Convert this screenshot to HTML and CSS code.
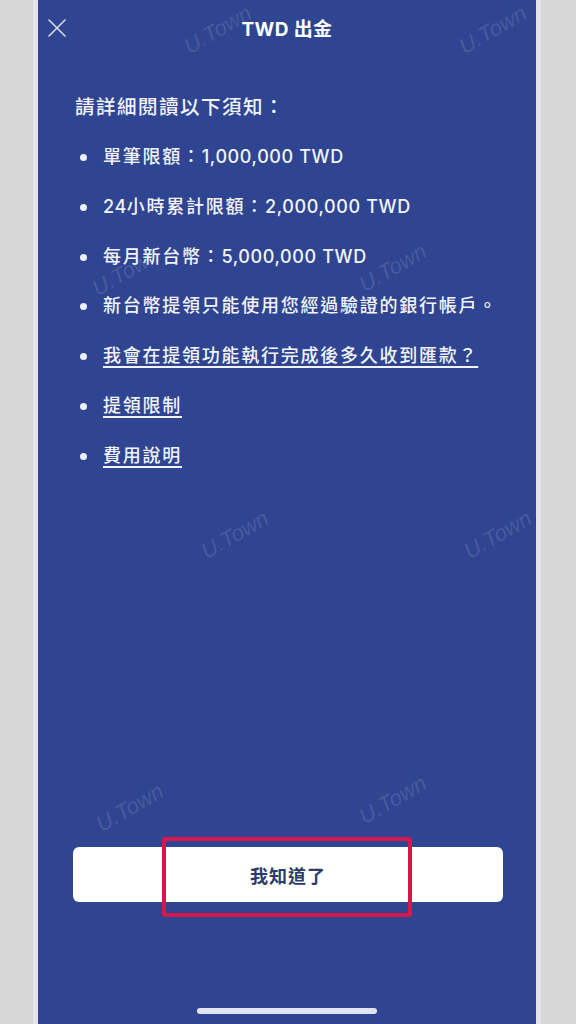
FILE: index.html
```html
<!DOCTYPE html>
<html lang="zh-Hant">
<head>
<meta charset="utf-8">
<title>TWD 出金</title>
<link rel="stylesheet" href="styles.css">
</head>
<body>
<div class="frame">
  <div class="screen">
    <div class="wm" style="left:180px;top:30px">U.Town</div>
    <div class="wm" style="left:455px;top:30px">U.Town</div>
    <div class="wm" style="left:88px;top:272px">U.Town</div>
    <div class="wm" style="left:355px;top:268px">U.Town</div>
    <div class="wm" style="left:197px;top:535px">U.Town</div>
    <div class="wm" style="left:460px;top:535px">U.Town</div>
    <div class="wm" style="left:92px;top:808px">U.Town</div>
    <div class="wm" style="left:355px;top:800px">U.Town</div>
    <header class="topbar">
      <button class="close" aria-label="關閉">
        <svg width="18" height="18" viewBox="0 0 18 18"><path d="M1 1 L17 17 M17 1 L1 17" stroke="#d9ddeb" stroke-width="1.6" fill="none" stroke-linecap="round"/></svg>
      </button>
      <h1 class="title">TWD 出金</h1>
    </header>
    <main class="content">
      <p class="lead">請詳細閱讀以下須知：</p>
      <ul class="notes">
        <li>單筆限額：<span class="num">1,000,000 TWD</span></li>
        <li><span class="num">24</span>小時累計限額：<span class="num">2,000,000 TWD</span></li>
        <li>每月新台幣：<span class="num">5,000,000 TWD</span></li>
        <li>新台幣提領只能使用您經過驗證的銀行帳戶。</li>
        <li><a href="#">我會在提領功能執行完成後多久收到匯款？</a></li>
        <li><a href="#">提領限制</a></li>
        <li><a href="#">費用說明</a></li>
      </ul>
    </main>
    <footer class="footer">
      <div class="btn-wrap">
        <button class="ok">我知道了</button>
        <span class="highlight"></span>
      </div>
      <div class="home"></div>
    </footer>
  </div>
</div>
</body>
</html>
```
FILE: styles.css
```css
* { box-sizing: border-box; }
html, body { margin: 0; padding: 0; }
body {
  background: #d7d7d7;
  width: 576px;
  height: 1024px;
  overflow: hidden;
  font-family: Inter, "Noto Sans CJK TC", sans-serif;
}
.frame {
  margin-left: 33px;
  width: 508px;
  height: 1024px;
  border-left: 5px solid #e3e3ea;
  border-right: 5px solid #e3e3ea;
}
.screen {
  position: relative;
  height: 1024px;
  background: #2f4591;
  display: flex;
  flex-direction: column;
  overflow: hidden;
  color: #f2f4f9;
}
.topbar {
  height: 54px;
  display: flex;
  align-items: center;
  justify-content: center;
  position: relative;
}
.close {
  position: absolute;
  left: 10px;
  top: 19px;
  width: 18px;
  height: 18px;
  padding: 0;
  border: 0;
  background: none;
  display: flex;
}
.title {
  margin: 0;
  font-size: 19px;
  font-weight: 700;
  letter-spacing: 0.4px;
  color: #ffffff;
}
.content {
  position: relative;
  padding: 39px 20px 0 37px;
}
.lead {
  margin: 0 0 22px;
  font-size: 19.5px;
  font-weight: 500;
  letter-spacing: 1.5px;
  line-height: 28px;
}
.notes {
  list-style: none;
  margin: 0;
  padding: 0;
  display: flex;
  flex-direction: column;
  gap: 21.8px;
}
.notes li {
  position: relative;
  padding-left: 28px;
  font-size: 18px;
  font-weight: 500;
  letter-spacing: 1.75px;
  line-height: 28px;
}
.notes .num {
  letter-spacing: 0.6px;
}
.notes li::before {
  content: "";
  position: absolute;
  left: 5px;
  top: 11px;
  width: 7px;
  height: 7px;
  border-radius: 50%;
  background: #eef0f7;
}
.notes a {
  color: #f2f4f9;
  text-decoration: underline;
  text-decoration-thickness: 1.5px;
  text-underline-offset: 4px;
}
.footer {
  position: relative;
  margin-top: auto;
  display: flex;
  flex-direction: column;
  align-items: center;
}
.btn-wrap {
  position: relative;
  width: 430px;
  margin-left: 2px;
}
.ok {
  display: block;
  width: 100%;
  height: 55px;
  border: 0;
  border-radius: 6px;
  background: #ffffff;
  color: #2e3a68;
  font-family: Inter, "Noto Sans CJK TC", sans-serif;
  font-size: 18px;
  font-weight: 700;
  letter-spacing: 1px;
}
.highlight {
  position: absolute;
  left: 89px;
  top: -10px;
  width: 250px;
  height: 80px;
  border: 4px solid #d8164b;
  border-radius: 3px;
  pointer-events: none;
}
.home {
  width: 180px;
  height: 6px;
  border-radius: 3px;
  background: #e2e5f1;
  margin-top: 106px;
  margin-bottom: 10px;
}
.wm {
  position: absolute;
  width: max-content;
  transform: translate(-50%, -50%) rotate(-30deg);
  font-family: "Liberation Sans", sans-serif;
  font-size: 22px;
  font-style: italic;
  line-height: 26px;
  color: rgba(255, 255, 255, 0.12);
  white-space: nowrap;
  pointer-events: none;
}
```
